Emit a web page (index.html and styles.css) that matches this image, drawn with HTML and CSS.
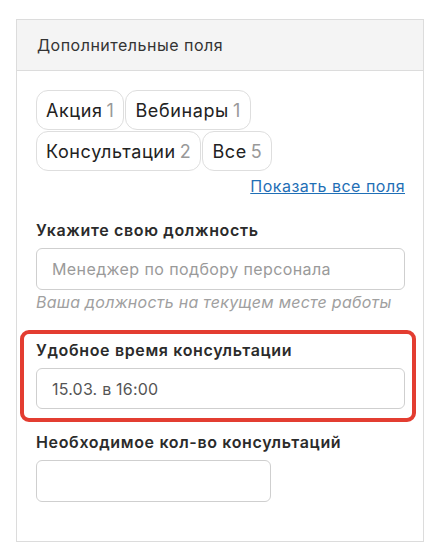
FILE: index.html
```html
<!DOCTYPE html>
<html lang="ru">
<head>
    <meta charset="UTF-8">
    <meta name="viewport" content="width=device-width, initial-scale=1.0">
    <title>Дополнительные поля</title>
    <link rel="stylesheet" href="styles.css">
</head>
<body>
    <div class="fields-card">
        <div class="fields-header">Дополнительные поля</div>
        <div class="fields-body">
            <div class="tags">
                <span class="tag">Акция <span class="count">1</span></span>
                <span class="tag">Вебинары <span class="count">1</span></span>
                <span class="tag">Консультации <span class="count">2</span></span>
                <span class="tag">Все <span class="count">5</span></span>
            </div>
            <div class="show-all"><a href="#">Показать все поля</a></div>

            <div class="field">
                <label for="position">Укажите свою должность</label>
                <input type="text" id="position" placeholder="Менеджер по подбору персонала">
                <div class="hint">Ваша должность на текущем месте работы</div>
            </div>

            <div class="field field-error">
                <label for="time">Удобное время консультации</label>
                <input type="text" id="time" value="15.03. в 16:00">
            </div>

            <div class="field">
                <label for="amount">Необходимое кол-во консультаций</label>
                <input type="text" id="amount" class="short">
            </div>
        </div>
    </div>
</body>
</html>
```

FILE: styles.css
```css
body {
    margin: 0;
    background: #ffffff;
    font-family: Inter, "Noto Sans", sans-serif;
    color: #333;
}
.fields-card {
    box-sizing: border-box;
    width: 408px;
    margin: 19px 0 0 16px;
    border: 1px solid #dcdcdc;
    background: #fff;
}
.fields-header {
    height: 50px;
    display: flex;
    align-items: center;
    padding-left: 20px;
    background: #f4f4f4;
    border-bottom: 1px solid #dcdcdc;
    font-size: 16px;
    letter-spacing: 0.5px;
    color: #333;
}
.fields-body {
    padding: 19px 18px 39px 19px;
}
.tags {
    display: flex;
    flex-wrap: wrap;
    gap: 1px;
    width: 260px;
}
.tag {
    box-sizing: border-box;
    height: 40px;
    display: inline-flex;
    align-items: center;
    padding: 0 9px;
    border: 1px solid #dedede;
    border-radius: 12px;
    font-size: 18px;
    letter-spacing: 0.6px;
    color: #222;
}
.tag .count {
    color: #999;
    margin-left: 4px;
}
.show-all {
    text-align: right;
    margin-top: 5px;
    line-height: 20px;
}
.show-all a {
    color: #1f6fb6;
    font-size: 16px;
    letter-spacing: 0.5px;
    text-decoration: underline;
}
.field {
    margin-top: 24px;
}
.field label {
    display: block;
    font-size: 16px;
    font-weight: 600;
    line-height: 20px;
    letter-spacing: 0.65px;
    color: #2b2b2b;
    margin-bottom: 8px;
}
.field input {
    box-sizing: border-box;
    width: 100%;
    height: 42px;
    padding: 0 15px;
    border: 1px solid #cfcfcf;
    border-radius: 6px;
    font-family: inherit;
    font-size: 16px;
    letter-spacing: 0.2px;
    color: #555;
    outline: none;
}
.field input::placeholder {
    color: #9a9a9a;
    letter-spacing: 0.4px;
}
.field input.short {
    width: 235px;
}
.hint {
    margin-top: 2px;
    font-size: 16px;
    line-height: 20px;
    letter-spacing: 0.25px;
    font-style: italic;
    color: #a0a0a0;
}
.field-error {
    margin: 18px -11px 0 -16px;
    padding: 6px 7px 9px 12px;
    border: 4px solid #e33d31;
    border-radius: 9px;
}
.field-error + .field {
    margin-top: 10px;
}
.field-error input {
    height: 41px;
}
```
